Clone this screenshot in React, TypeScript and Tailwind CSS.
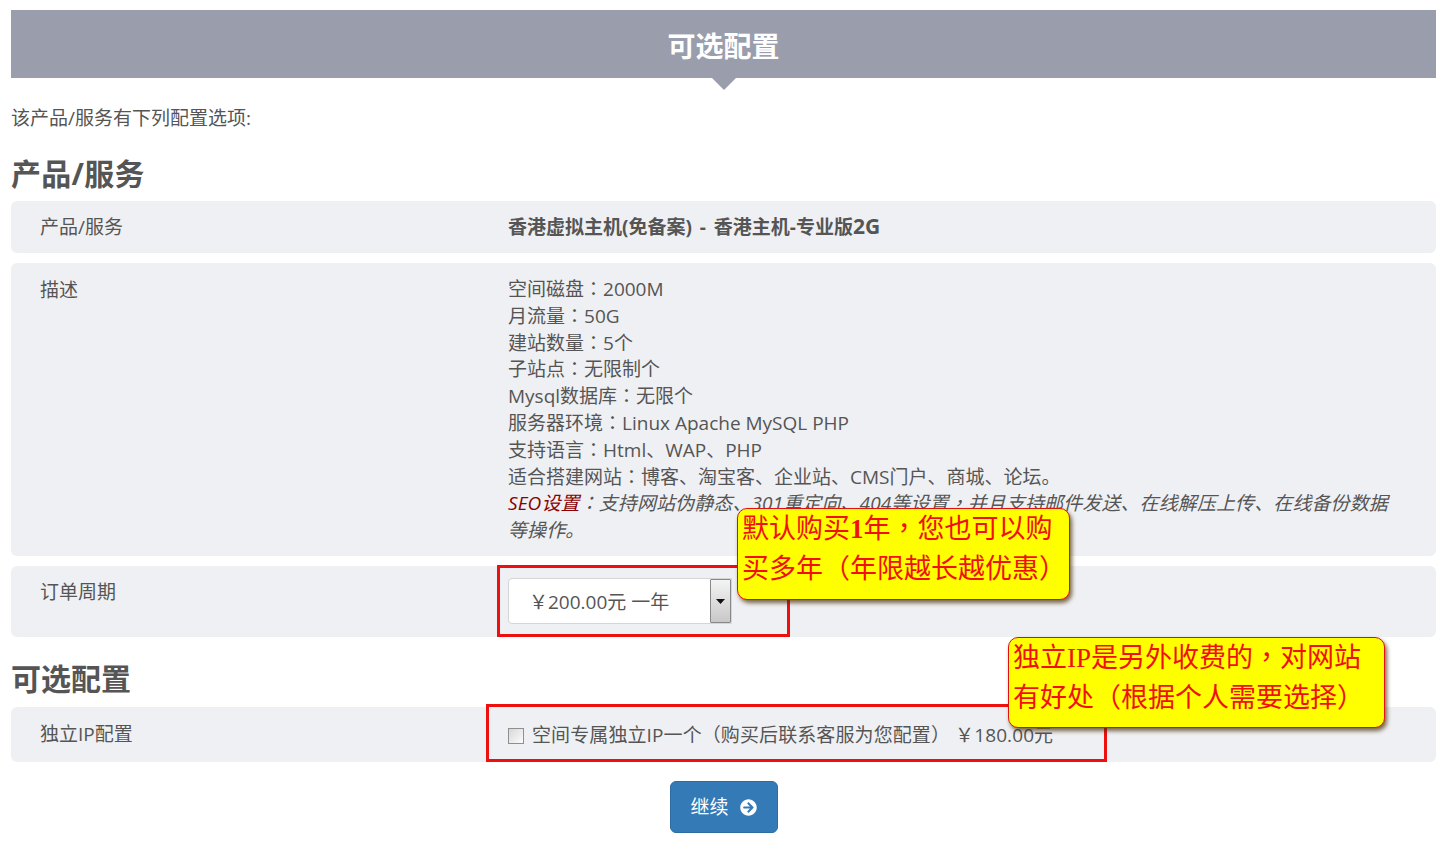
import type { ReactNode } from "react";
import { FaArrowCircleRight } from "react-icons/fa";

const specs = [
  "空间磁盘：2000M",
  "月流量：50G",
  "建站数量：5个",
  "子站点：无限制个",
  "Mysql数据库：无限个",
  "服务器环境：Linux Apache MySQL PHP",
  "支持语言：Html、WAP、PHP",
  "适合搭建网站：博客、淘宝客、企业站、CMS门户、商城、论坛。",
];

// the TC font centres these marks in their box, as the picture has them
function Marks({ text }: { text: string }) {
  return (
    <>
      {text.split(/([：，（）])/).map((part, i) =>
        i % 2 === 1 ? (
          <span
            key={i}
            className="leading-none [font-family:'Noto_Sans_CJK_TC',sans-serif]"
          >
            {part}
          </span>
        ) : (
          part
        )
      )}
    </>
  );
}

function Row({
  label,
  className,
  labelClass = "",
  children,
}: {
  label: string;
  className: string;
  labelClass?: string;
  children: ReactNode;
}) {
  return (
    <div className={`flex rounded-md bg-[#eff0f3] pl-[29px] ${className}`}>
      <div className={`w-[468px] shrink-0 ${labelClass}`}>{label}</div>
      <div className="min-w-0 flex-1 pr-[40px]">{children}</div>
    </div>
  );
}

function Callout({
  className,
  children,
}: {
  className: string;
  children: ReactNode;
}) {
  return (
    <div
      className={`absolute z-10 whitespace-nowrap rounded-[10px] border border-[#e01010] bg-[#ffff00] pl-[4px] text-[27px] text-[#f01010] shadow-[2px_3px_4px_rgba(70,40,0,0.7)] [font-family:'Liberation_Serif','Noto_Sans_CJK_SC',serif] ${className}`}
    >
      {children}
    </div>
  );
}

export default function App() {
  return (
    <div className="relative h-[844px] overflow-hidden bg-white pl-[11px] pr-[13px] pt-[10px] text-[19px] leading-[27px] text-[#555] [font-family:'Open_Sans','Noto_Sans_CJK_SC',sans-serif]">
      <div className="relative flex h-[68px] items-center justify-center bg-[#9a9dac] pt-[4px] text-[28px] font-bold text-white">
        可选配置
        <div className="absolute left-[701px] top-[68px] h-0 w-0 border-x-[12px] border-t-[12px] border-x-transparent border-t-[#9a9dac]" />
      </div>

      <p className="mt-[27px]">该产品/服务有下列配置选项:</p>

      <h2 className="mt-[22px] text-[30px] font-bold leading-[40px] tracking-[0.3px]">产品/服务</h2>
      <Row label="产品/服务" className="mt-[7px] h-[52px] items-center">
        <span className="font-bold [word-spacing:3px]">
          香港虚拟主机(免备案) - 香港主机-专业版<span className="text-[21px]">2G</span>
        </span>
      </Row>

      <Row
        label="描述"
        labelClass="pt-px"
        className="mt-[10px] h-[293px] pt-[13px]"
      >
        {specs.map((line) => (
          <div key={line} className="h-[26.8px]">
            <Marks text={line} />
          </div>
        ))}
        <div className="italic leading-[26.8px] tracking-[0.1px]">
          <span className="text-[#8b0000]">SEO设置</span>
          <Marks text="：支持网站伪静态、301重定向、404等设置，并且支持邮件发送、在线解压上传、在线备份数据等操作。" />
        </div>
      </Row>

      <Row
        label="订单周期"
        labelClass="pt-px"
        className="mt-[10px] h-[71px] pt-[12px]"
      >
        <div className="flex h-[46px] w-[224px] items-center rounded-l border border-[#d5d5d5] bg-white pl-[20px]">
          <span className="flex-1 whitespace-nowrap pt-[2px]">￥200.00元 一年</span>
          <span className="flex h-[44px] w-[21px] items-center justify-center rounded-[1px] border border-[#888] bg-gradient-to-b from-[#f4f4f4] to-[#c8c8c8]">
            <svg width="9" height="5" viewBox="0 0 9 5">
              <path d="M0 0h9L4.5 5z" fill="#111" />
            </svg>
          </span>
        </div>
      </Row>

      <h2 className="mt-[22px] text-[30px] font-bold leading-[40px]">可选配置</h2>
      <Row label="独立IP配置" className="mt-[8px] h-[55px] items-center">
        <label className="flex items-center gap-[8px] whitespace-nowrap pt-[2px] tracking-[0.1px]">
          <input
            type="checkbox"
            className="m-0 h-[16px] w-[16px] appearance-none border border-[#8e8f8f] bg-gradient-to-br from-[#d8d8d8] to-[#fbfbfb]"
          />
          <span>
            <Marks text="空间专属独立IP一个（购买后联系客服为您配置） ￥180.00元" />
          </span>
        </label>
      </Row>

      <div className="mt-[19px] flex justify-center">
        <button className="flex h-[52px] w-[108px] items-center justify-center gap-[11px] rounded-md border border-[#2e6da4] bg-[#337ab7] text-white">
          继续
          <FaArrowCircleRight className="h-[17px] w-[17px]" />
        </button>
      </div>

      <div className="absolute left-[497px] top-[565px] h-[72px] w-[293px] border-[3px] border-[#ee0f0f]" />
      <div className="absolute left-[486px] top-[704px] h-[58px] w-[621px] border-[3px] border-[#ee0f0f]" />

      <Callout className="left-[737px] top-[508px] h-[92px] w-[333px] pt-[0px]">
        <div className="h-[40px] leading-[40px]">
          默认购买<b>1</b>年
          <Marks text="，" />
          您也可以购
        </div>
        <div className="h-[40px] leading-[40px]">
          <Marks text="买多年（年限越长越优惠）" />
        </div>
      </Callout>
      <Callout className="left-[1008px] top-[637px] h-[91px] w-[377px] pt-[0px]">
        <div className="h-[40px] leading-[40px]">
          独立IP是另外收费的
          <Marks text="，" />
          对网站
        </div>
        <div className="h-[40px] leading-[40px]">
          <Marks text="有好处（根据个人需要选择）" />
        </div>
      </Callout>
    </div>
  );
}
